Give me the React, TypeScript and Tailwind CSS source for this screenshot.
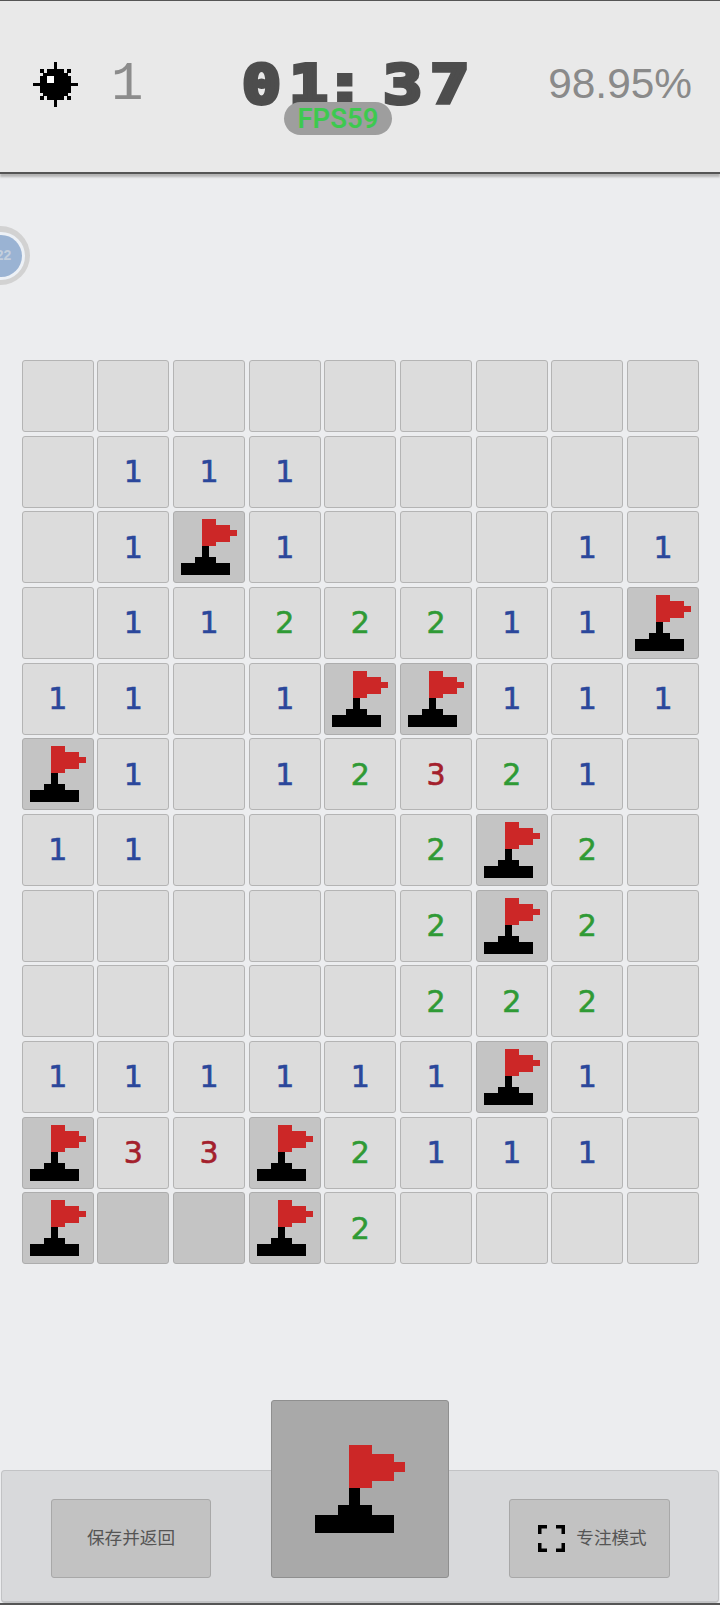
const board = [
  "_________",
  "_111_____",
  "_1F1___11",
  "_1122211F",
  "11_1FF111",
  "F1_12321_",
  "11___2F2_",
  "_____2F2_",
  "_____222_",
  "111111F1_",
  "F33F2111_",
  "F##F2____",
];

function Flag({ className }: { className: string }) {
  return (
    <svg viewBox="0 0 72 72" className={className} shapeRendering="crispEdges">
      <rect x="29" y="8.3" width="14" height="27" fill="#cc2727" />
      <rect x="43" y="13.5" width="14" height="17" fill="#cc2727" />
      <rect x="57" y="19" width="7" height="6" fill="#cc2727" />
      <rect x="29" y="35" width="6.5" height="11.5" fill="#000" />
      <rect x="22" y="46" width="21" height="6.5" fill="#000" />
      <rect x="7.7" y="52" width="49.3" height="11.5" fill="#000" />
    </svg>
  );
}

function Mine() {
  return (
    <svg viewBox="0 0 45 45" className="h-[45px] w-[45px] shrink-0" shapeRendering="crispEdges">
      <rect x="21" y="0" width="3" height="45" fill="#000" />
      <rect x="0" y="21" width="45" height="3" fill="#000" />
      <rect x="7" y="7" width="4" height="4" fill="#000" />
      <rect x="34" y="7" width="4" height="4" fill="#000" />
      <rect x="7" y="34" width="4" height="4" fill="#000" />
      <rect x="34" y="34" width="4" height="4" fill="#000" />
      <rect x="14" y="7" width="17" height="31" fill="#000" />
      <rect x="10" y="11" width="25" height="23" fill="#000" />
      <rect x="7" y="14" width="31" height="17" fill="#000" />
      <rect x="14" y="14" width="7" height="7" fill="#fff" />
    </svg>
  );
}

function FocusIcon() {
  return (
    <svg viewBox="0 0 27 27" className="h-[27px] w-[27px] shrink-0" fill="none" stroke="#000" strokeWidth="3.5">
      <path d="M9 1.75H1.75V9" />
      <path d="M18 1.75H25.25V9" />
      <path d="M9 25.25H1.75V18" />
      <path d="M18 25.25H25.25V18" />
    </svg>
  );
}

function Cell({ v }: { v: string }) {
  if (v === "F") {
    return (
      <div className="h-[72px] rounded-[3px] border border-[#adadad] bg-[#c4c4c4]">
        <Flag className="-m-px h-[72px] w-[72px]" />
      </div>
    );
  }
  if (v === "#") {
    return <div className="h-[72px] rounded-[3px] border border-[#adadad] bg-[#c4c4c4]" />;
  }
  let color = "text-[#2b479b]";
  if (v === "2") color = "text-[#2f9a35]";
  if (v === "3") color = "text-[#a3202c]";
  return (
    <div className={`flex h-[72px] items-center justify-center rounded-[3px] border border-[#b4b4b4] bg-[#dcdcdc] font-['DejaVu_Sans',sans-serif] text-[30px] [-webkit-text-stroke:0.6px] ${color}`}>
      {v === "_" ? "" : v}
    </div>
  );
}

export default function App() {
  return (
    <div className="relative flex h-[1605px] w-[720px] flex-col overflow-hidden border-b-2 border-[#555] bg-[#ecedef] font-['Liberation_Sans',sans-serif]">
      <header className="relative flex h-[174px] shrink-0 items-center border-t border-b-2 border-[#555] bg-[#e9e9e9] pb-[4px] pl-[33px] shadow-[0_3px_2px_#b4b4b4]">
        <Mine />
        <span className="ml-[33px] w-[40px] font-['Liberation_Mono',monospace] text-[54px] leading-none text-[#8c8c8c]">1</span>
        <span className="ml-[91px] origin-left scale-x-[1.2] font-['DejaVu_Sans_Mono',monospace] text-[54px] leading-none font-bold tracking-[6.7px] whitespace-pre text-[#4d4d4d] [-webkit-text-stroke:4px_#4d4d4d]">
          01<span className="-ml-[9px] mr-[9px]">:</span>37
        </span>
        <span className="absolute top-[60px] right-[28px] text-[42.4px] leading-[46px] text-[#8a8a8a]">98.95%</span>
        <span className="absolute top-[101px] left-[284px] flex h-[33px] w-[108px] items-center justify-center rounded-full bg-[#9e9e9e] font-['Roboto',sans-serif] text-[27.5px] font-semibold text-[#3dc94f]">FPS59</span>
      </header>

      <div className="absolute top-[226px] -left-[29px] flex h-[59px] w-[59px] items-center justify-center rounded-full bg-[#d2d2d2]">
        <div className="flex h-[48px] w-[48px] items-center justify-center rounded-full bg-[#edf1f6]">
          <div className="flex h-[42px] w-[42px] items-center justify-center rounded-full bg-[#9ab3d3] pl-[6px] text-[14px] font-bold text-[#c4cfdd]">22</div>
        </div>
      </div>

      <main className="flex-1 pt-[186px] pl-[21.7px]">
        <div className="grid w-[677.4px] grid-cols-9 gap-[3.67px]">
          {board.map((row, r) => row.split("").map((v, c) => <Cell key={`${r}-${c}`} v={v} />))}
        </div>
      </main>

      <footer className="mx-px flex h-[133px] shrink-0 items-end justify-between rounded-[4px] border border-b-2 border-[#c2c3c5] bg-[#d8d9db] pr-[48px] pb-[23px] pl-[49px] font-['Liberation_Sans','Noto_Sans_CJK_SC',sans-serif] text-[17.6px] text-[#555]">
        <button className="h-[79px] w-[160px] rounded-[3px] border border-[#a8a8a8] bg-[#c2c2c2]">保存并返回</button>
        <button className="flex h-[178px] w-[178px] items-center justify-center rounded-[3px] border border-[#8f8f8f] bg-[#a9a9a9]">
          <Flag className="h-[115px] w-[115px]" />
        </button>
        <button className="flex h-[79px] w-[161px] items-center justify-center gap-[11px] rounded-[3px] border border-[#a8a8a8] bg-[#c2c2c2] pl-[6px]">
          <FocusIcon />
          专注模式
        </button>
      </footer>
    </div>
  );
}
